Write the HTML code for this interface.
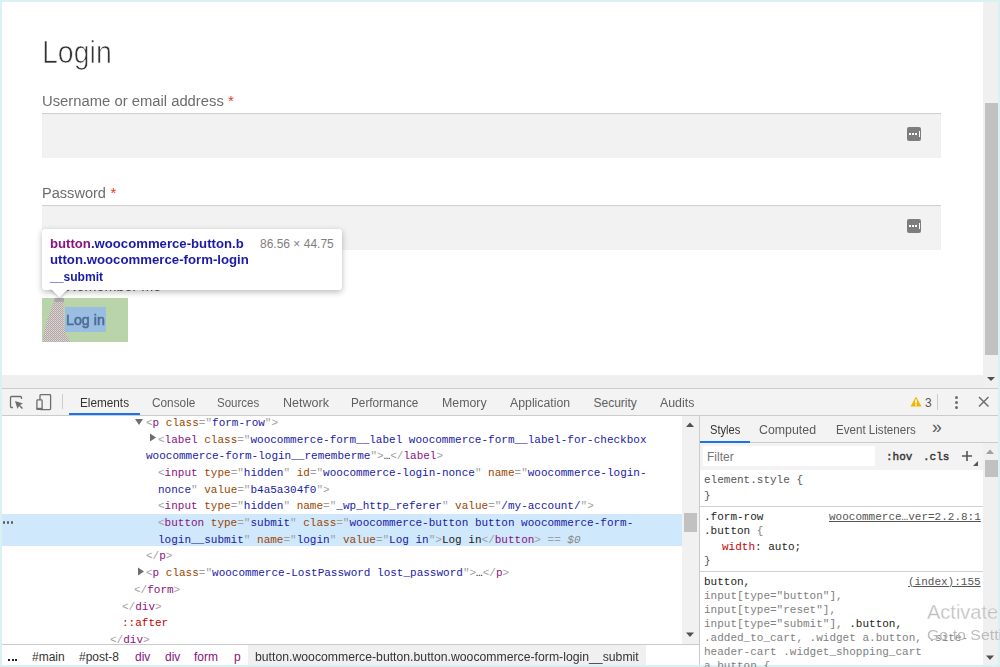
<!DOCTYPE html>
<html><head><meta charset="utf-8"><style>
html,body{margin:0;padding:0;}
body{width:1000px;height:667px;position:relative;overflow:hidden;background:#d9f1f3;}
body>div,body>svg{position:absolute;}
</style></head><body>
<div style="left:2px;top:2px;width:996px;height:373px;background:#fff;"></div>
<div style="left:2px;top:375px;width:981px;height:13px;background:#efefef;"></div>
<div style="left:983px;top:2px;width:15px;height:386px;background:#f0f0f0;"></div>
<div style="left:985px;top:103px;width:13px;height:252px;background:#c1c1c1;"></div>
<svg style="left:987px;top:377px" width="9" height="6"><path d="M0 0H8L4 4Z" fill="#505050"/></svg>
<div style="left:42px;top:36.88px;font:400 30.5px/30.5px 'Liberation Sans', sans-serif;color:#333;white-space:pre;transform:scaleX(0.935);transform-origin:0 0;-webkit-text-stroke:0.7px #fff;">Login</div>
<div style="left:42px;top:92.88px;font:400 15.5px/15.5px 'Liberation Sans', sans-serif;color:#6d6d6d;white-space:pre;transform:scaleX(0.955);transform-origin:0 0;">Username or email address</div>
<div style="left:228px;top:93.30px;font:400 15px/15px 'Liberation Sans', sans-serif;color:#e2401c;white-space:pre;">*</div>
<div style="left:42px;top:113px;width:899px;height:45px;background:#f2f2f2;box-shadow:inset 0 1px 1px rgba(0,0,0,.15);"></div>
<div style="left:42px;top:184.88px;font:400 15.5px/15.5px 'Liberation Sans', sans-serif;color:#6d6d6d;white-space:pre;transform:scaleX(0.94);transform-origin:0 0;">Password</div>
<div style="left:110.5px;top:185.30px;font:400 15px/15px 'Liberation Sans', sans-serif;color:#e2401c;white-space:pre;">*</div>
<div style="left:42px;top:205px;width:899px;height:45px;background:#f2f2f2;box-shadow:inset 0 1px 1px rgba(0,0,0,.15);"></div>
<div style="left:907px;top:127px;width:14px;height:14px;background:#7d7d7d;border-radius:2px"></div>
<div style="left:909px;top:133px;width:2px;height:2px;background:#fff;box-shadow:3px 0 #fff,6px 0 #fff"></div>
<div style="left:919px;top:131px;width:1px;height:6px;background:#fff"></div>
<div style="left:907px;top:219px;width:14px;height:14px;background:#7d7d7d;border-radius:2px"></div>
<div style="left:909px;top:225px;width:2px;height:2px;background:#fff;box-shadow:3px 0 #fff,6px 0 #fff"></div>
<div style="left:919px;top:223px;width:1px;height:6px;background:#fff"></div>
<div style="left:66px;top:278.30px;font:400 15px/15px 'Liberation Sans', sans-serif;color:#555;white-space:pre;transform:scaleX(0.96);transform-origin:0 0;">Remember me</div>
<div style="left:42px;top:298px;width:86px;height:44px;background:#b9d4a9;"></div>
<svg style="left:42px;top:297px" width="30" height="46"><defs><pattern id="dth" width="2" height="2" patternUnits="userSpaceOnUse"><rect width="2" height="2" fill="#aaa6b2"/><rect width="1" height="1" fill="#eec6a6"/><rect x="1" y="1" width="1" height="1" fill="#d6dbe6"/></pattern></defs><path d="M12.4 1.0 L21.5 1.0 L21.5 13.0 L23.0 35.0 L24.0 38.0 L28.8 44.8 L1.0 44.8 L2.5 33.0 L5.2 23.0 L8.8 13.0 L11.5 5.0Z" fill="url(#dth)"/><rect x="12.4" y="1" width="9.6" height="4" fill="#aaa4ae"/></svg>
<div style="left:65px;top:307px;width:41px;height:25px;background:#9abde2;"></div>
<div style="left:66px;top:312.30px;font:400 15px/15px 'Liberation Sans', sans-serif;color:#4f6c93;white-space:pre;transform:scaleX(0.95);transform-origin:0 0;-webkit-text-stroke:0.6px #4f6c93;">Log in</div>
<div style="left:42px;top:229px;width:300px;height:61px;background:#fff;border-radius:3px;box-shadow:0 2px 6px rgba(0,0,0,.28)"></div>
<svg style="left:49px;top:287px;overflow:visible;filter:drop-shadow(0 1px 1.5px rgba(0,0,0,.25))" width="22" height="12"><path d="M0 0H21L10.5 10.5Z" fill="#fff"/></svg>
<div style="left:44px;top:284px;width:296px;height:5px;background:#fff;"></div>
<div style="left:50px;top:236.50px;font:700 13px/13px 'Liberation Sans', sans-serif;color:#1a1aa6;white-space:pre;transform:scaleX(1.012);transform-origin:0 0;"><span style="color:#881280">button</span>.woocommerce-button.b</div>
<div style="left:50px;top:253.20px;font:700 13px/13px 'Liberation Sans', sans-serif;color:#1a1aa6;white-space:pre;transform:scaleX(1.016);transform-origin:0 0;">utton.woocommerce-form-login</div>
<div style="left:50px;top:270.00px;font:700 13px/13px 'Liberation Sans', sans-serif;color:#1a1aa6;white-space:pre;transform:scaleX(0.93);transform-origin:0 0;">__submit</div>
<div style="left:260px;top:237.84px;font:400 12px/12px 'Liberation Sans', sans-serif;color:#808080;white-space:pre;">86.56 × 44.75</div>
<div style="left:2px;top:388px;width:996px;height:1px;background:#cbcbcb;"></div>
<div style="left:2px;top:389px;width:996px;height:26px;background:#f3f3f3;"></div>
<div style="left:2px;top:415px;width:996px;height:1px;background:#cbcbcb;"></div>
<svg style="left:9px;top:395px" width="16" height="16"><path d="M4 12.5H2.5Q1.5 12.5 1.5 11.5V2.5Q1.5 1.5 2.5 1.5H11.5Q12.5 1.5 12.5 2.5V4" fill="none" stroke="#6e6e6e" stroke-width="1.3"/><path d="M6 6L14 8.5L11 10L14 13L13 14L10 11L8.5 14Z" fill="#6e6e6e"/></svg>
<svg style="left:35px;top:393px" width="18" height="18"><rect x="5" y="1.6" width="10.6" height="15" rx="0.8" fill="none" stroke="#6e6e6e" stroke-width="1.3"/><rect x="1.9" y="6.9" width="5.2" height="9.4" rx="0.8" fill="#f3f3f3" stroke="#6e6e6e" stroke-width="1.3"/><rect x="1.5" y="14.8" width="6" height="2" fill="#6e6e6e"/></svg>
<div style="left:62px;top:394px;width:1px;height:15px;background:#cccccc;"></div>
<div style="left:80px;top:396.84px;font:400 12px/12px 'Liberation Sans', sans-serif;color:#333;white-space:pre;transform:scaleX(0.98);transform-origin:0 0;">Elements</div>
<div style="left:151.5px;top:396.84px;font:400 12px/12px 'Liberation Sans', sans-serif;color:#5f5f5f;white-space:pre;transform:scaleX(0.985);transform-origin:0 0;">Console</div>
<div style="left:217px;top:396.84px;font:400 12px/12px 'Liberation Sans', sans-serif;color:#5f5f5f;white-space:pre;transform:scaleX(0.96);transform-origin:0 0;">Sources</div>
<div style="left:282.5px;top:396.84px;font:400 12px/12px 'Liberation Sans', sans-serif;color:#5f5f5f;white-space:pre;transform:scaleX(1.045);transform-origin:0 0;">Network</div>
<div style="left:351px;top:396.84px;font:400 12px/12px 'Liberation Sans', sans-serif;color:#5f5f5f;white-space:pre;transform:scaleX(0.98);transform-origin:0 0;">Performance</div>
<div style="left:441.5px;top:396.84px;font:400 12px/12px 'Liberation Sans', sans-serif;color:#5f5f5f;white-space:pre;transform:scaleX(1.03);transform-origin:0 0;">Memory</div>
<div style="left:510px;top:396.84px;font:400 12px/12px 'Liberation Sans', sans-serif;color:#5f5f5f;white-space:pre;transform:scaleX(1.025);transform-origin:0 0;">Application</div>
<div style="left:593.5px;top:396.84px;font:400 12px/12px 'Liberation Sans', sans-serif;color:#5f5f5f;white-space:pre;">Security</div>
<div style="left:659.5px;top:396.84px;font:400 12px/12px 'Liberation Sans', sans-serif;color:#5f5f5f;white-space:pre;transform:scaleX(1.03);transform-origin:0 0;">Audits</div>
<div style="left:69px;top:413px;width:71px;height:2px;background:#1a73e8;"></div>
<svg style="left:910px;top:396px" width="12" height="11"><path d="M6 0.5L11.5 10.5H0.5Z" fill="#f2b600"/><rect x="5.2" y="3.5" width="1.6" height="4" fill="#fff"/><rect x="5.2" y="8.2" width="1.6" height="1.4" fill="#fff"/></svg>
<div style="left:925px;top:396.84px;font:400 12px/12px 'Liberation Sans', sans-serif;color:#555;white-space:pre;">3</div>
<div style="left:937px;top:394px;width:1px;height:16px;background:#cccccc;"></div>
<div style="left:955px;top:396px;width:3px;height:3px;border-radius:50%;background:#6e6e6e"></div>
<div style="left:955px;top:401px;width:3px;height:3px;border-radius:50%;background:#6e6e6e"></div>
<div style="left:955px;top:406px;width:3px;height:3px;border-radius:50%;background:#6e6e6e"></div>
<svg style="left:978px;top:396px" width="12" height="12"><path d="M1 1L10.5 10.5M10.5 1L1 10.5" stroke="#6e6e6e" stroke-width="1.5"/></svg>
<div style="left:2px;top:416px;width:680px;height:229px;background:#fff;"></div>
<div style="left:682px;top:416px;width:17px;height:228px;background:#f1f1f1;"></div>
<svg style="left:686px;top:422px" width="9" height="6"><path d="M0 5H8L4 0.5Z" fill="#505050"/></svg>
<svg style="left:686px;top:632px" width="9" height="6"><path d="M0 0.5H8L4 5Z" fill="#505050"/></svg>
<div style="left:684px;top:513px;width:13px;height:19px;background:#c1c1c1;"></div>
<div style="left:699px;top:416px;width:1px;height:249px;background:#cbcbcb;"></div>
<div style="left:2px;top:514px;width:680px;height:32px;background:#cfe8fc;"></div>
<div style="left:2.5px;top:521.3px;width:2.2px;height:2.4px;background:#5a5a5a;border-radius:1px;"></div>
<div style="left:6.5px;top:521.3px;width:2.2px;height:2.4px;background:#5a5a5a;border-radius:1px;"></div>
<div style="left:10.5px;top:521.3px;width:2.2px;height:2.4px;background:#5a5a5a;border-radius:1px;"></div>
<div style="left:146px;top:417.81px;font:400 11.0px/11.0px 'Liberation Mono', monospace;color:#222;white-space:pre;"><span style="color:#a0a0a0">&lt;</span><span style="color:#881280">p</span><span style="color:#994500"> class</span><span style="color:#a0a0a0">=&quot;</span><span style="color:#1a1aa6">form-row</span><span style="color:#a0a0a0">&quot;</span><span style="color:#a0a0a0">&gt;</span></div>
<svg style="left:135px;top:417.7px" width="9" height="8"><path d="M0 1H8L4 7Z" fill="#6e6e6e"/></svg>
<div style="left:158px;top:434.51px;font:400 11.0px/11.0px 'Liberation Mono', monospace;color:#222;white-space:pre;"><span style="color:#a0a0a0">&lt;</span><span style="color:#881280">label</span><span style="color:#994500"> class</span><span style="color:#a0a0a0">=&quot;</span><span style="color:#1a1aa6">woocommerce-form__label woocommerce-form__label-for-checkbox</span></div>
<svg style="left:149px;top:432.9px" width="8" height="9"><path d="M1 0.5V8.5L7 4.5Z" fill="#6e6e6e"/></svg>
<div style="left:146px;top:451.21px;font:400 11.0px/11.0px 'Liberation Mono', monospace;color:#222;white-space:pre;"><span style="color:#1a1aa6">woocommerce-form-login__rememberme</span><span style="color:#a0a0a0">&quot;</span><span style="color:#a0a0a0">&gt;</span><span style="color:#222">…</span><span style="color:#a0a0a0">&lt;/</span><span style="color:#881280">label</span><span style="color:#a0a0a0">&gt;</span></div>
<div style="left:158px;top:467.91px;font:400 11.0px/11.0px 'Liberation Mono', monospace;color:#222;white-space:pre;"><span style="color:#a0a0a0">&lt;</span><span style="color:#881280">input</span><span style="color:#994500"> type</span><span style="color:#a0a0a0">=&quot;</span><span style="color:#1a1aa6">hidden</span><span style="color:#a0a0a0">&quot;</span><span style="color:#994500"> id</span><span style="color:#a0a0a0">=&quot;</span><span style="color:#1a1aa6">woocommerce-login-nonce</span><span style="color:#a0a0a0">&quot;</span><span style="color:#994500"> name</span><span style="color:#a0a0a0">=&quot;</span><span style="color:#1a1aa6">woocommerce-login-</span></div>
<div style="left:158px;top:484.61px;font:400 11.0px/11.0px 'Liberation Mono', monospace;color:#222;white-space:pre;"><span style="color:#1a1aa6">nonce</span><span style="color:#a0a0a0">&quot;</span><span style="color:#994500"> value</span><span style="color:#a0a0a0">=&quot;</span><span style="color:#1a1aa6">b4a5a304f0</span><span style="color:#a0a0a0">&quot;</span><span style="color:#a0a0a0">&gt;</span></div>
<div style="left:158px;top:501.31px;font:400 11.0px/11.0px 'Liberation Mono', monospace;color:#222;white-space:pre;"><span style="color:#a0a0a0">&lt;</span><span style="color:#881280">input</span><span style="color:#994500"> type</span><span style="color:#a0a0a0">=&quot;</span><span style="color:#1a1aa6">hidden</span><span style="color:#a0a0a0">&quot;</span><span style="color:#994500"> name</span><span style="color:#a0a0a0">=&quot;</span><span style="color:#1a1aa6">_wp_http_referer</span><span style="color:#a0a0a0">&quot;</span><span style="color:#994500"> value</span><span style="color:#a0a0a0">=&quot;</span><span style="color:#1a1aa6">/my-account/</span><span style="color:#a0a0a0">&quot;</span><span style="color:#a0a0a0">&gt;</span></div>
<div style="left:158px;top:518.01px;font:400 11.0px/11.0px 'Liberation Mono', monospace;color:#222;white-space:pre;"><span style="color:#a0a0a0">&lt;</span><span style="color:#881280">button</span><span style="color:#994500"> type</span><span style="color:#a0a0a0">=&quot;</span><span style="color:#1a1aa6">submit</span><span style="color:#a0a0a0">&quot;</span><span style="color:#994500"> class</span><span style="color:#a0a0a0">=&quot;</span><span style="color:#1a1aa6">woocommerce-button button woocommerce-form-</span></div>
<div style="left:158px;top:534.71px;font:400 11.0px/11.0px 'Liberation Mono', monospace;color:#222;white-space:pre;"><span style="color:#1a1aa6">login__submit</span><span style="color:#a0a0a0">&quot;</span><span style="color:#994500"> name</span><span style="color:#a0a0a0">=&quot;</span><span style="color:#1a1aa6">login</span><span style="color:#a0a0a0">&quot;</span><span style="color:#994500"> value</span><span style="color:#a0a0a0">=&quot;</span><span style="color:#1a1aa6">Log in</span><span style="color:#a0a0a0">&quot;</span><span style="color:#a0a0a0">&gt;</span><span style="color:#222">Log in</span><span style="color:#a0a0a0">&lt;/</span><span style="color:#881280">button</span><span style="color:#a0a0a0">&gt;</span><span style="color:#a0a0a0"> == </span><span style="color:#888;font-style:italic">$0</span></div>
<div style="left:146px;top:551.41px;font:400 11.0px/11.0px 'Liberation Mono', monospace;color:#222;white-space:pre;"><span style="color:#a0a0a0">&lt;/</span><span style="color:#881280">p</span><span style="color:#a0a0a0">&gt;</span></div>
<div style="left:146px;top:568.11px;font:400 11.0px/11.0px 'Liberation Mono', monospace;color:#222;white-space:pre;"><span style="color:#a0a0a0">&lt;</span><span style="color:#881280">p</span><span style="color:#994500"> class</span><span style="color:#a0a0a0">=&quot;</span><span style="color:#1a1aa6">woocommerce-LostPassword lost_password</span><span style="color:#a0a0a0">&quot;</span><span style="color:#a0a0a0">&gt;</span><span style="color:#222">…</span><span style="color:#a0a0a0">&lt;/</span><span style="color:#881280">p</span><span style="color:#a0a0a0">&gt;</span></div>
<svg style="left:137px;top:566.5px" width="8" height="9"><path d="M1 0.5V8.5L7 4.5Z" fill="#6e6e6e"/></svg>
<div style="left:134px;top:584.81px;font:400 11.0px/11.0px 'Liberation Mono', monospace;color:#222;white-space:pre;"><span style="color:#a0a0a0">&lt;/</span><span style="color:#881280">form</span><span style="color:#a0a0a0">&gt;</span></div>
<div style="left:122px;top:601.51px;font:400 11.0px/11.0px 'Liberation Mono', monospace;color:#222;white-space:pre;"><span style="color:#a0a0a0">&lt;/</span><span style="color:#881280">div</span><span style="color:#a0a0a0">&gt;</span></div>
<div style="left:122px;top:618.21px;font:400 11.0px/11.0px 'Liberation Mono', monospace;color:#222;white-space:pre;"><span style="color:#c80000">::after</span></div>
<div style="left:110px;top:634.91px;font:400 11.0px/11.0px 'Liberation Mono', monospace;color:#222;white-space:pre;"><span style="color:#a0a0a0">&lt;/</span><span style="color:#881280">div</span><span style="color:#a0a0a0">&gt;</span></div>
<div style="left:2px;top:644px;width:697px;height:1px;background:#cbcbcb;"></div>
<div style="left:2px;top:645px;width:697px;height:20px;background:#fff;"></div>
<div style="left:8px;top:659px;width:2px;height:2px;background:#222;"></div>
<div style="left:11.5px;top:659px;width:2px;height:2px;background:#222;"></div>
<div style="left:15px;top:659px;width:2px;height:2px;background:#222;"></div>
<div style="left:32px;top:650.84px;font:400 12px/12px 'Liberation Sans', sans-serif;color:#333;white-space:pre;">#main</div>
<div style="left:79px;top:650.84px;font:400 12px/12px 'Liberation Sans', sans-serif;color:#333;white-space:pre;">#post-8</div>
<div style="left:135px;top:650.84px;font:400 12px/12px 'Liberation Sans', sans-serif;color:#881280;white-space:pre;">div</div>
<div style="left:165px;top:650.84px;font:400 12px/12px 'Liberation Sans', sans-serif;color:#881280;white-space:pre;">div</div>
<div style="left:194px;top:650.84px;font:400 12px/12px 'Liberation Sans', sans-serif;color:#881280;white-space:pre;">form</div>
<div style="left:234px;top:650.84px;font:400 12px/12px 'Liberation Sans', sans-serif;color:#881280;white-space:pre;">p</div>
<div style="left:248px;top:645px;width:398px;height:20px;background:#f0f0f0;"></div>
<div style="left:255px;top:650.84px;font:400 12px/12px 'Liberation Sans', sans-serif;color:#333;white-space:pre;transform:scaleX(1.02);transform-origin:0 0;">button.woocommerce-button.button.woocommerce-form-login__submit</div>
<div style="left:700px;top:416px;width:298px;height:27px;background:#f3f3f3;"></div>
<div style="left:709.5px;top:424.34px;font:400 12px/12px 'Liberation Sans', sans-serif;color:#333;white-space:pre;transform:scaleX(0.93);transform-origin:0 0;">Styles</div>
<div style="left:759px;top:424.34px;font:400 12px/12px 'Liberation Sans', sans-serif;color:#5a5a5a;white-space:pre;transform:scaleX(1.03);transform-origin:0 0;">Computed</div>
<div style="left:836px;top:424.34px;font:400 12px/12px 'Liberation Sans', sans-serif;color:#5a5a5a;white-space:pre;transform:scaleX(0.965);transform-origin:0 0;">Event Listeners</div>
<div style="left:932px;top:419.19px;font:400 17.5px/17.5px 'Liberation Sans', sans-serif;color:#5a5a5a;white-space:pre;">»</div>
<div style="left:700px;top:442px;width:298px;height:1px;background:#cbcbcb;"></div>
<div style="left:700px;top:441px;width:50px;height:2px;background:#1a73e8;"></div>
<div style="left:700px;top:443px;width:298px;height:27px;background:#f3f3f3;"></div>
<div style="left:703px;top:446px;width:172px;height:20px;background:#fff;"></div>
<div style="left:707px;top:450.84px;font:400 12px/12px 'Liberation Sans', sans-serif;color:#757575;white-space:pre;">Filter</div>
<div style="left:886px;top:452.11px;font:400 11.0px/11.0px 'Liberation Mono', monospace;color:#333;white-space:pre;-webkit-text-stroke:0.4px #333;">:hov</div>
<div style="left:923px;top:452.11px;font:400 11.0px/11.0px 'Liberation Mono', monospace;color:#333;white-space:pre;-webkit-text-stroke:0.4px #333;">.cls</div>
<svg style="left:961px;top:450px" width="18" height="17"><path d="M6 1V11M1 6H11" stroke="#555" stroke-width="1.6"/><path d="M17 11V16H12Z" fill="#555"/></svg>
<div style="left:700px;top:470px;width:283px;height:195px;background:#fff;"></div>
<div style="left:983px;top:443px;width:15px;height:222px;background:#f0f0f0;"></div>
<svg style="left:986px;top:449px" width="9" height="6"><path d="M0 5H8L4 0.5Z" fill="#a0a0a0"/></svg>
<div style="left:985px;top:460px;width:13px;height:17px;background:#c1c1c1;"></div>
<svg style="left:986px;top:655px" width="9" height="6"><path d="M0 0.5H8L4 5Z" fill="#505050"/></svg>
<div style="left:704px;top:475.11px;font:400 11.0px/11.0px 'Liberation Mono', monospace;color:#555;white-space:pre;">element.style {</div>
<div style="left:704px;top:491.11px;font:400 11.0px/11.0px 'Liberation Mono', monospace;color:#555;white-space:pre;">}</div>
<div style="left:700px;top:506px;width:283px;height:1px;background:#d0d0d0;"></div>
<div style="left:704px;top:512.11px;font:400 11.0px/11.0px 'Liberation Mono', monospace;color:#222;white-space:pre;">.form-row</div>
<div style="left:704px;top:526.11px;font:400 11.0px/11.0px 'Liberation Mono', monospace;color:#222;white-space:pre;">.button <span style="color:#808080">{</span></div>
<div style="left:829px;top:512.11px;font:400 11.0px/11.0px 'Liberation Mono', monospace;color:#555;white-space:pre;text-decoration:underline;">woocommerce…ver=2.2.8:1</div>
<div style="left:722px;top:541.61px;font:400 11.0px/11.0px 'Liberation Mono', monospace;color:#222;white-space:pre;"><span style="color:#c80000">width</span>: auto;</div>
<div style="left:704px;top:556.11px;font:400 11.0px/11.0px 'Liberation Mono', monospace;color:#555;white-space:pre;">}</div>
<div style="left:700px;top:571px;width:283px;height:1px;background:#d0d0d0;"></div>
<div style="left:704px;top:577.11px;font:400 11.0px/11.0px 'Liberation Mono', monospace;color:#222;white-space:pre;">button,</div>
<div style="left:704px;top:591.11px;font:400 11.0px/11.0px 'Liberation Mono', monospace;color:#808080;white-space:pre;">input[type=&quot;button&quot;],</div>
<div style="left:704px;top:605.11px;font:400 11.0px/11.0px 'Liberation Mono', monospace;color:#808080;white-space:pre;">input[type=&quot;reset&quot;],</div>
<div style="left:704px;top:619.11px;font:400 11.0px/11.0px 'Liberation Mono', monospace;color:#222;white-space:pre;"><span style="color:#808080">input[type="submit"],</span> .button,</div>
<div style="left:704px;top:633.11px;font:400 11.0px/11.0px 'Liberation Mono', monospace;color:#222;white-space:pre;"><span style="color:#808080">.added_to_cart, .widget a.button, .site-</span></div>
<div style="left:704px;top:647.11px;font:400 11.0px/11.0px 'Liberation Mono', monospace;color:#808080;white-space:pre;">header-cart .widget_shopping_cart</div>
<div style="left:704px;top:661.11px;font:400 11.0px/11.0px 'Liberation Mono', monospace;color:#808080;white-space:pre;">a.button {</div>
<div style="left:908px;top:577.11px;font:400 11.0px/11.0px 'Liberation Mono', monospace;color:#555;white-space:pre;text-decoration:underline;">(index):155</div>
<div style="left:927px;top:602.07px;font:400 20px/20px 'Liberation Sans', sans-serif;color:#bdbdbd;white-space:pre;-webkit-text-stroke:0.3px #fff;">Activate Windows</div>
<div style="left:927px;top:627.30px;font:400 15px/15px 'Liberation Sans', sans-serif;color:#bcbcbc;white-space:pre;transform:scaleX(1.06);transform-origin:0 0;">Go to Settings to activate Windows.</div>
</body></html>
